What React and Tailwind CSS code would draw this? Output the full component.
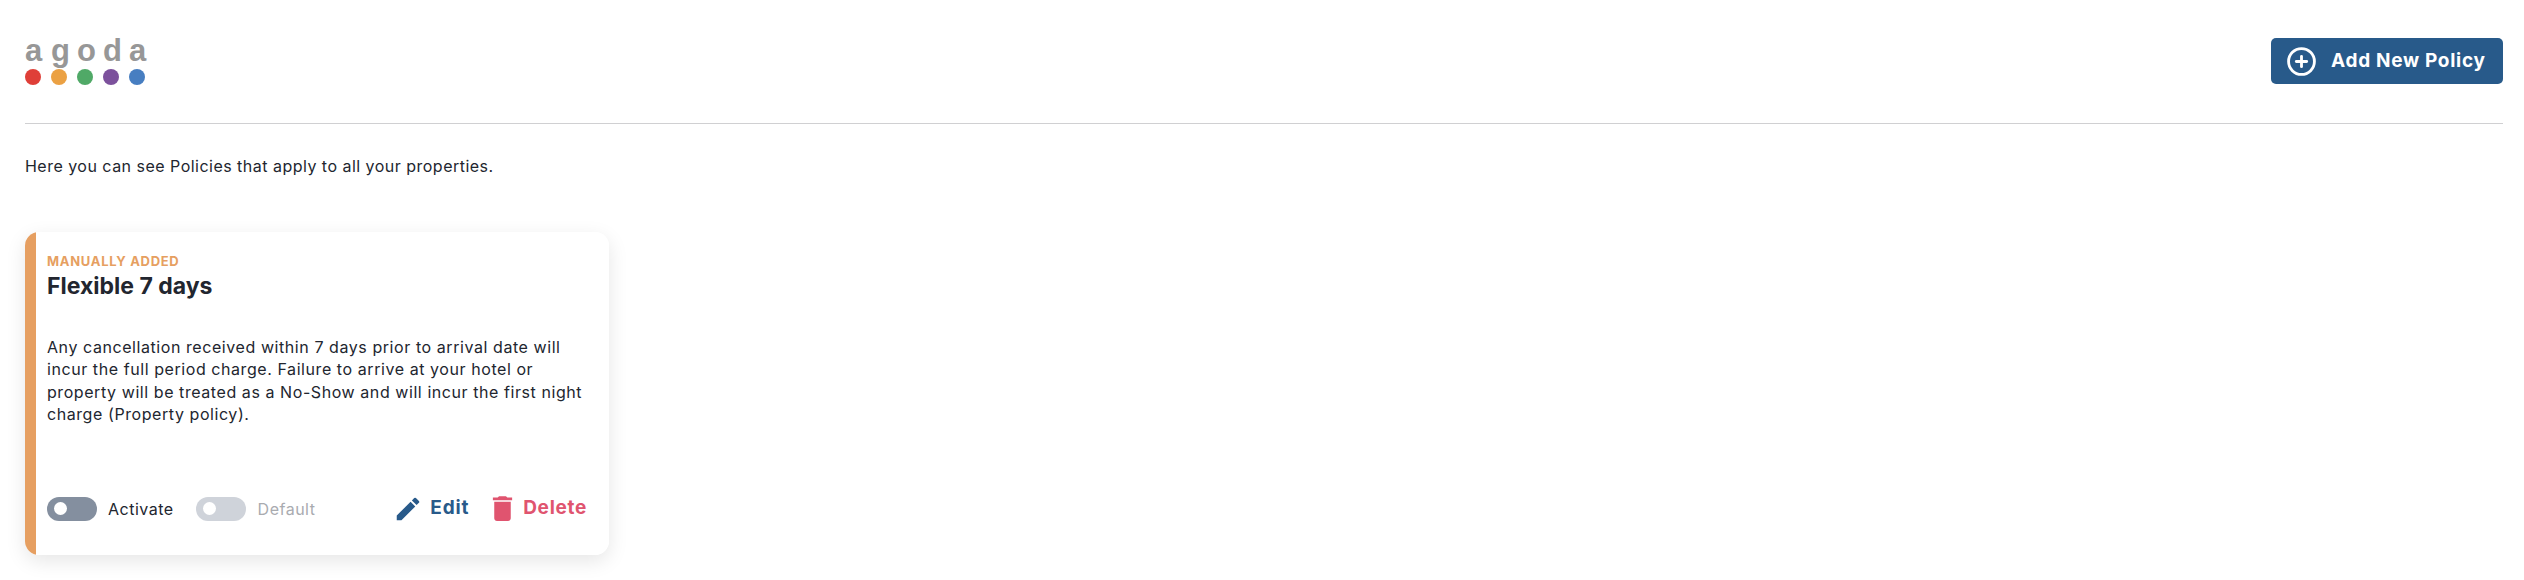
import React from "react";
import { MdEdit, MdDelete } from "react-icons/md";
import { FiPlusCircle } from "react-icons/fi";

function Toggle({ className }) {
  return (
    <div className={`flex h-6 w-[50px] items-center rounded-full pl-[7px] ${className}`}>
      <div className="h-[13px] w-[13px] rounded-full bg-white" />
    </div>
  );
}

export default function App() {
  return (
    <div className="min-h-[580px] bg-white pr-[21px] pl-[25px] font-['Inter','Liberation_Sans',sans-serif] text-[#22262f]">
      <header className="flex h-[124px] items-start justify-between border-b border-[#d0d0d2] pt-[38px]">
        <div className="-mt-[3px] flex w-[120px] flex-col">
          <div className="flex justify-between font-['Liberation_Sans',sans-serif] text-[31px] leading-[32px] font-bold text-[#979797]">
            <span className="w-4 text-center">a</span>
            <span className="w-4 text-center">g</span>
            <span className="w-4 text-center">o</span>
            <span className="w-4 text-center">d</span>
            <span className="w-4 text-center">a</span>
          </div>
          <div className="mt-[2px] flex justify-between">
            <span className="h-4 w-4 rounded-full bg-[#df3f38]" />
            <span className="h-4 w-4 rounded-full bg-[#eba143]" />
            <span className="h-4 w-4 rounded-full bg-[#50a967]" />
            <span className="h-4 w-4 rounded-full bg-[#7c519c]" />
            <span className="h-4 w-4 rounded-full bg-[#477ec1]" />
          </div>
        </div>
        <button className="flex h-[46px] w-[232px] items-center rounded-[5px] bg-[#285a8a] pl-[15px] text-white">
          <FiPlusCircle className="h-[31px] w-[31px]" strokeWidth={2.2} />
          <span className="ml-[14px] text-[19px] font-bold tracking-[0.7px]">Add New Policy</span>
        </button>
      </header>

      <p className="mt-[31px] text-[16px] leading-[22px] tracking-[0.48px]">Here you can see Policies that apply to all your properties.</p>

      <article className="mt-[55px] flex h-[323px] w-[584px] overflow-hidden rounded-[14px] shadow-[0_6px_20px_rgba(0,0,0,0.1)]">
        <div className="w-[11px] shrink-0 bg-[#e69f61]" />
        <div className="flex flex-1 flex-col bg-white pt-[21px] pr-[22px] pl-[11px]">
          <div className="text-[13px] leading-[16px] font-bold tracking-[0.7px] text-[#e69f61]">MANUALLY ADDED</div>
          <h2 className="mt-[3px] text-[23px] leading-[28px] font-bold">Flexible 7 days</h2>
          <p className="mt-[36px] text-[16px] leading-[22.4px] tracking-[0.57px]">
            Any cancellation received within 7 days prior to arrival date will incur the full period charge. Failure to arrive at your hotel or property will be treated as a No-Show and will incur the first night charge (Property policy).
          </p>
          <div className="mt-auto mb-[30px] flex items-center">
            <Toggle className="bg-[#848f9f]" />
            <span className="ml-[11px] text-[16px] tracking-[0.5px]">Activate</span>
            <Toggle className="ml-[22px] bg-[#cfd3da]" />
            <span className="ml-[12px] text-[16px] tracking-[0.5px] text-[#a9abb0]">Default</span>
            <div className="ml-auto flex items-center text-[#285a8a]">
              <MdEdit className="h-[30px] w-[30px]" />
              <span className="ml-[7px] text-[19px] font-bold tracking-[0.8px]">Edit</span>
            </div>
            <div className="ml-[17px] flex items-center text-[#e0546f]">
              <MdDelete className="h-[33px] w-[33px]" />
              <span className="ml-[4px] text-[19px] font-bold tracking-[0.7px]">Delete</span>
            </div>
          </div>
        </div>
      </article>
    </div>
  );
}
